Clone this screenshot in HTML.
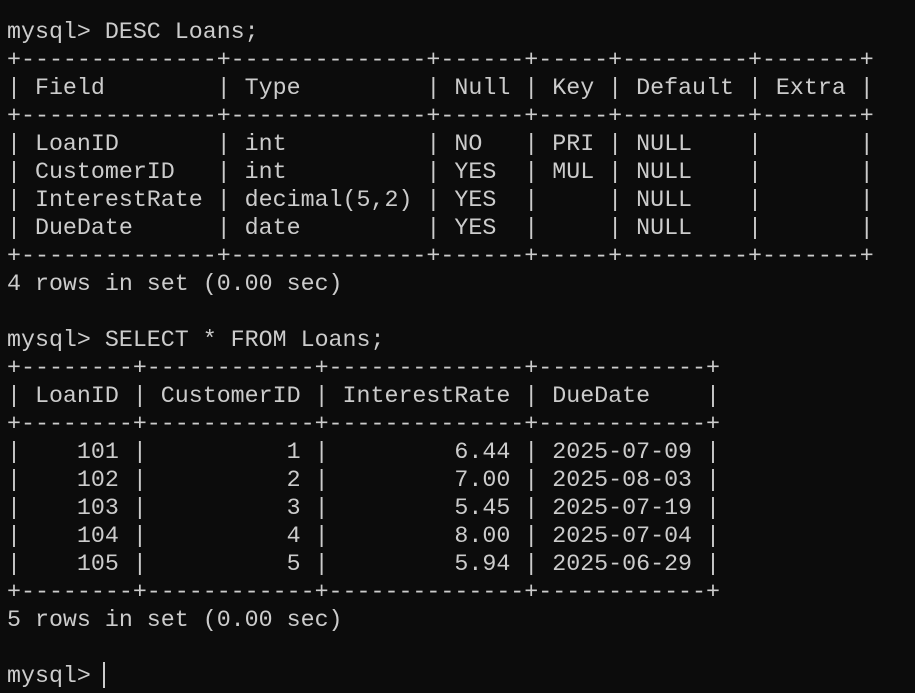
<!DOCTYPE html>
<html><head><meta charset="utf-8"><style>
html,body{margin:0;padding:0;background:#0c0c0c;width:915px;height:693px;overflow:hidden}
pre{margin:0;position:absolute;left:7px;top:18px;font-family:"Liberation Mono","DejaVu Sans Mono",monospace;font-size:23.3px;line-height:28px;color:#cccccc;white-space:pre}
.cur{display:inline-block;width:2px;height:26px;background:#cccccc;vertical-align:-6px;margin-left:-2px}
</style></head><body><pre>mysql&gt; DESC Loans;
+--------------+--------------+------+-----+---------+-------+
| Field        | Type         | Null | Key | Default | Extra |
+--------------+--------------+------+-----+---------+-------+
| LoanID       | int          | NO   | PRI | NULL    |       |
| CustomerID   | int          | YES  | MUL | NULL    |       |
| InterestRate | decimal(5,2) | YES  |     | NULL    |       |
| DueDate      | date         | YES  |     | NULL    |       |
+--------------+--------------+------+-----+---------+-------+
4 rows in set (0.00 sec)

mysql&gt; SELECT * FROM Loans;
+--------+------------+--------------+------------+
| LoanID | CustomerID | InterestRate | DueDate    |
+--------+------------+--------------+------------+
|    101 |          1 |         6.44 | 2025-07-09 |
|    102 |          2 |         7.00 | 2025-08-03 |
|    103 |          3 |         5.45 | 2025-07-19 |
|    104 |          4 |         8.00 | 2025-07-04 |
|    105 |          5 |         5.94 | 2025-06-29 |
+--------+------------+--------------+------------+
5 rows in set (0.00 sec)

mysql&gt; <span class="cur"></span></pre></body></html>
